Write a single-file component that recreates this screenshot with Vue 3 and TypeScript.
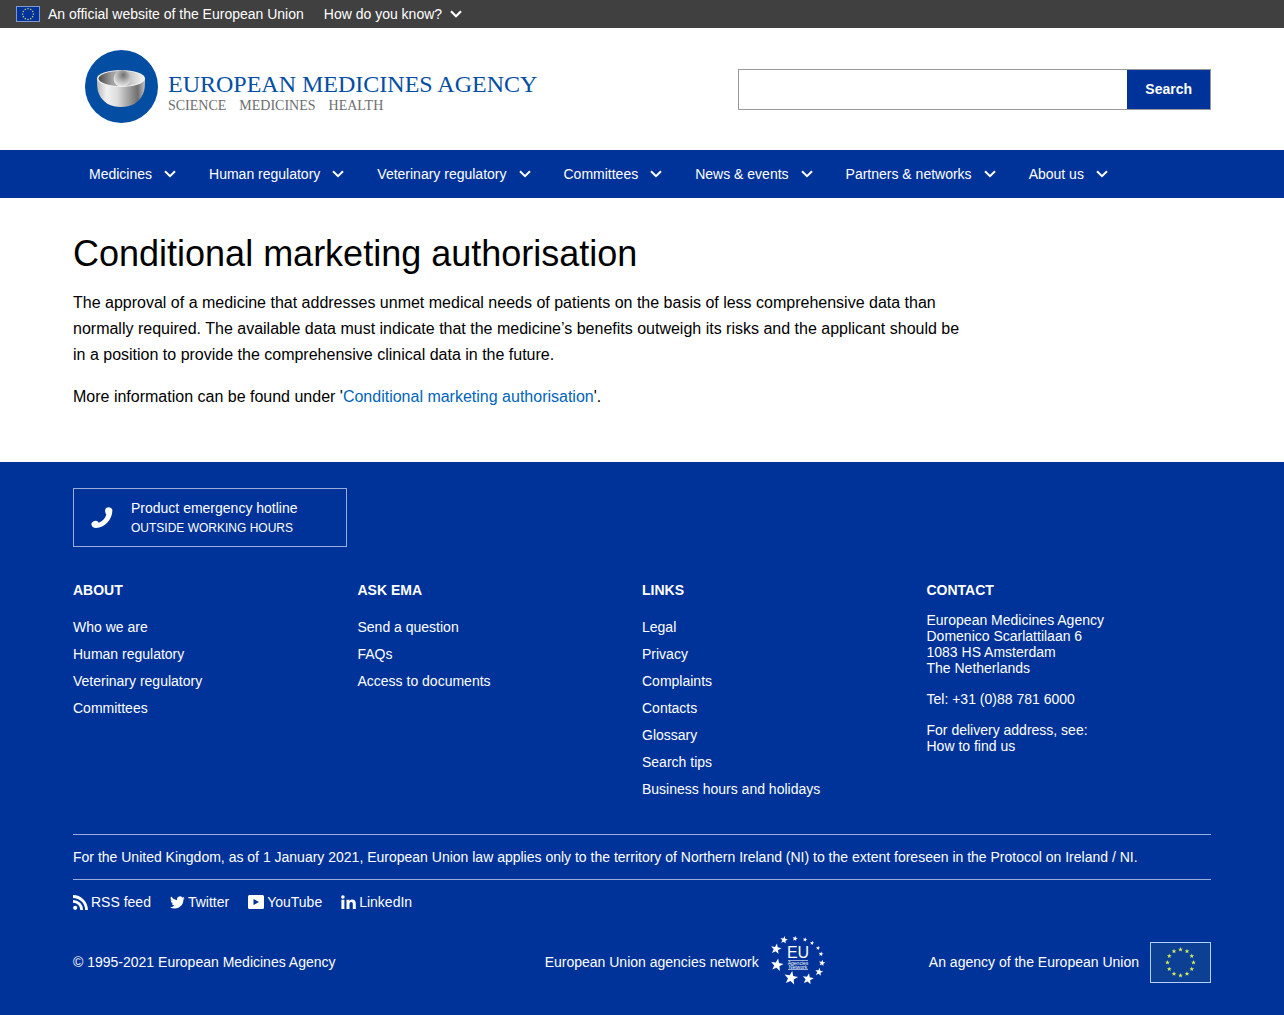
<script setup lang="ts">
interface Star {
  x: number
  y: number
  r: number
}

interface LinkColumn {
  title: string
  links: string[]
}

const menu: string[] = [
  'Medicines',
  'Human regulatory',
  'Veterinary regulatory',
  'Committees',
  'News & events',
  'Partners & networks',
  'About us',
]

const columns: LinkColumn[] = [
  { title: 'About', links: ['Who we are', 'Human regulatory', 'Veterinary regulatory', 'Committees'] },
  { title: 'Ask EMA', links: ['Send a question', 'FAQs', 'Access to documents'] },
  {
    title: 'Links',
    links: ['Legal', 'Privacy', 'Complaints', 'Contacts', 'Glossary', 'Search tips', 'Business hours and holidays'],
  },
]

function starPoints(s: Star, tilt = 0): string {
  return Array.from({ length: 10 }, (_, i) => {
    const radius = i % 2 === 0 ? s.r : s.r * 0.42
    const angle = ((i * 36 - 90 + tilt) * Math.PI) / 180
    return `${(s.x + radius * Math.cos(angle)).toFixed(2)},${(s.y + radius * Math.sin(angle)).toFixed(2)}`
  }).join(' ')
}

function ring(cx: number, cy: number, distance: number, r: number): Star[] {
  return Array.from({ length: 12 }, (_, i) => {
    const angle = (i * Math.PI) / 6
    return { x: cx + distance * Math.sin(angle), y: cy - distance * Math.cos(angle), r }
  })
}

const smallFlag = ring(12, 8, 5.4, 1.1)
const largeFlag = ring(30.5, 20.5, 13, 2.5)

// The network emblem's stars shrink clockwise from the lower left.
const networkStars: Star[] = [
  { x: 6, y: 13, r: 5.6 },
  { x: 14, y: 4, r: 4 },
  { x: 25, y: 2.6, r: 2.8 },
  { x: 35, y: 3.6, r: 2.4 },
  { x: 42, y: 7, r: 2.2 },
  { x: 48, y: 12, r: 2.2 },
  { x: 51, y: 18, r: 2.6 },
  { x: 52, y: 27, r: 3.4 },
  { x: 49, y: 36, r: 4.2 },
  { x: 38, y: 43, r: 5.8 },
  { x: 21, y: 42, r: 7.2 },
  { x: 7, y: 29, r: 6.6 },
]
</script>

<template>
  <div class="page">
    <div class="globan">
      <svg class="globan-flag" width="24" height="16" viewBox="0 0 24 16" aria-hidden="true">
        <rect x="0.5" y="0.5" width="23" height="15" fill="#039" stroke="#7f99cc" />
        <polygon v-for="(s, i) in smallFlag" :key="i" :points="starPoints(s)" fill="#e8e86a" />
      </svg>
      <span>An official website of the European Union</span>
      <button type="button" class="know">
        How do you know?
        <svg width="12" height="8" viewBox="0 0 12 8" aria-hidden="true">
          <path d="M1 1.2 6 6.2 11 1.2" fill="none" stroke="currentColor" stroke-width="2.2" />
        </svg>
      </button>
    </div>

    <header class="header container">
      <a class="logo" href="#">
        <svg width="73" height="73" viewBox="0 0 73 73" aria-hidden="true">
          <defs>
            <linearGradient id="bowl" x1="0" x2="1">
              <stop offset="0" stop-color="#b9b9b9" />
              <stop offset="0.2" stop-color="#f1f1f1" />
              <stop offset="0.42" stop-color="#dedede" />
              <stop offset="0.85" stop-color="#6f6f6f" />
              <stop offset="1" stop-color="#c4c4c4" />
            </linearGradient>
            <linearGradient id="hollow" x1="0" x2="1">
              <stop offset="0" stop-color="#4c4c4c" />
              <stop offset="0.3" stop-color="#a0a0a0" />
              <stop offset="0.65" stop-color="#bdbdbd" />
              <stop offset="1" stop-color="#f4f4f4" />
            </linearGradient>
            <radialGradient id="ball" cx="0.58" cy="0.3" r="0.7">
              <stop offset="0" stop-color="#6e6e6e" />
              <stop offset="0.5" stop-color="#b4b4b4" />
              <stop offset="1" stop-color="#ededed" />
            </radialGradient>
          </defs>
          <circle cx="36.5" cy="36.5" r="36.5" fill="#034ea2" />
          <path d="M12 28C12 34 12 40 14 44C18 53 26 57 36 57S54 53 58 44C60 40 60 34 60 28Z" fill="url(#bowl)" />
          <ellipse cx="36" cy="28.5" rx="24" ry="8.5" fill="#f2f2f2" />
          <ellipse cx="36" cy="28.5" rx="22.5" ry="7.5" fill="url(#hollow)" />
          <circle cx="37" cy="28.5" r="8.5" fill="url(#ball)" />
        </svg>
        <span class="wordmark">
          <span class="agency">EUROPEAN MEDICINES AGENCY</span>
          <span class="tagline"><span>SCIENCE</span><span>MEDICINES</span><span>HEALTH</span></span>
        </span>
      </a>
      <form class="search" role="search" @submit.prevent>
        <input type="search" aria-label="Search" />
        <button type="submit">Search</button>
      </form>
    </header>

    <nav class="nav">
      <div class="nav-items container">
        <button v-for="item in menu" :key="item" type="button">
          {{ item }}
          <svg width="12" height="8" viewBox="0 0 12 8" aria-hidden="true">
            <path d="M1 1.2 6 6.2 11 1.2" fill="none" stroke="currentColor" stroke-width="2" />
          </svg>
        </button>
      </div>
    </nav>

    <main class="main container">
      <h1>Conditional marketing authorisation</h1>
      <p>
        The approval of a medicine that addresses unmet medical needs of patients on the basis of less comprehensive
        data than normally required. The available data must indicate that the medicine’s benefits outweigh its risks
        and the applicant should be in a position to provide the comprehensive clinical data in the future.
      </p>
      <p>More information can be found under '<a href="#">Conditional marketing authorisation</a>'.</p>
    </main>

    <footer class="footer">
      <div class="container">
        <a class="hotline" href="#">
          <svg width="22" height="22" viewBox="0 0 22 22" aria-hidden="true">
            <path
              fill="#fff"
              d="M15.5 .7C17.6-.6 20.8.5 21.3 2.700 22 11.500 14 21 5 21 2.500 21 .4 19.300.4 16.900.5 14.500 4.800 12.900 6.600 14.300L7.700 15.700C11 14.500 14.200 11.500 15.300 7.700L14.500 6C13.700 4 14 1.700 15.500.7Z"
            />
          </svg>
          <span class="hotline-text">
            <span>Product emergency hotline</span>
            <small>OUTSIDE WORKING HOURS</small>
          </span>
        </a>

        <div class="columns">
          <section v-for="column in columns" :key="column.title">
            <h2>{{ column.title }}</h2>
            <ul>
              <li v-for="link in column.links" :key="link"><a href="#">{{ link }}</a></li>
            </ul>
          </section>
          <section>
            <h2>Contact</h2>
            <address>
              <p>
                European Medicines Agency<br />Domenico Scarlattilaan 6<br />1083 HS Amsterdam<br />The Netherlands
              </p>
              <p>Tel: +31 (0)88 781 6000</p>
              <p>For delivery address, see:<br /><a href="#">How to find us</a></p>
            </address>
          </section>
        </div>

        <p class="notice">
          For the United Kingdom, as of 1 January 2021, European Union law applies only to the territory of Northern
          Ireland (NI) to the extent foreseen in the Protocol on Ireland / NI.
        </p>

        <div class="social">
          <a href="#">
            <svg width="15" height="15" viewBox="0 0 15 15" aria-hidden="true">
              <circle cx="2.2" cy="12.8" r="2.1" fill="#fff" />
              <path
                d="M0 6.3A8.7 8.7 0 0 1 8.7 15M0 1.5A13.5 13.5 0 0 1 13.5 15"
                fill="none"
                stroke="#fff"
                stroke-width="2.8"
              />
            </svg>
            RSS feed
          </a>
          <a href="#">
            <svg width="15" height="15" viewBox="0 0 24 24" aria-hidden="true">
              <path
                fill="#fff"
                d="M23.500 4.600a10 10 0 0 1-2.800.8 5 5 0 0 0 2.100-2.700c-.9.500-2 1-3.100 1.200a4.900 4.900 0 0 0-8.400 4.500A14 14 0 0 1 1.700 2.500a4.900 4.900 0 0 0 1.500 6.500 4.900 4.900 0 0 1-2.200-.6v.1a4.900 4.900 0 0 0 3.900 4.800 5 5 0 0 1-2.200.1 4.900 4.900 0 0 0 4.600 3.400A9.900 9.900 0 0 1 0 19.500a13.900 13.900 0 0 0 7.500 2.200c9.100 0 14.300-7.700 14-14.600A10 10 0 0 0 23.500 4.600Z"
              />
            </svg>
            Twitter
          </a>
          <a href="#">
            <svg width="16" height="14" viewBox="0 0 16 14" aria-hidden="true">
              <path
                fill="#fff"
                fill-rule="evenodd"
                d="M1.500 0h13A1.500 1.500 0 0 1 16 1.500v11a1.500 1.500 0 0 1-1.500 1.500h-13A1.500 1.500 0 0 1 0 12.500v-11A1.500 1.500 0 0 1 1.500 0ZM5.500 4v6L11 7Z"
              />
            </svg>
            YouTube
          </a>
          <a href="#">
            <svg width="15" height="14" viewBox="0 0 15 14" aria-hidden="true">
              <circle cx="1.900" cy="2" r="1.800" fill="#fff" />
              <path
                fill="#fff"
                d="M.4 4.800h3V14h-3ZM5.500 4.800h2.900v1.300C9 5.100 10 4.500 11.300 4.500c2.700 0 3.500 1.700 3.500 4.200V14h-3V9.300c0-1.200-.1-2.400-1.600-2.400S8.500 8 8.500 9.200V14h-3Z"
              />
            </svg>
            LinkedIn
          </a>
        </div>

        <div class="bottom">
          <span>© 1995-2021 European Medicines Agency</span>
          <a class="network" href="#">
            European Union agencies network
            <svg width="56" height="52" viewBox="0 0 56 52" aria-hidden="true">
              <polygon v-for="(s, i) in networkStars" :key="i" :points="starPoints(s, 10)" fill="#fff" />
              <text class="emblem-title" x="28" y="22" text-anchor="middle">EU</text>
              <path d="M18 24.500H38M18 33.500H38" stroke="#fff" stroke-opacity="0.6" />
              <text class="emblem-text" text-anchor="middle">
                <tspan x="28" y="29">Agencies</tspan>
                <tspan x="28" y="33">Network</tspan>
              </text>
            </svg>
          </a>
          <a class="union" href="#">
            An agency of the European Union
            <svg width="61" height="41" viewBox="0 0 61 41" aria-hidden="true">
              <rect x="0.500" y="0.500" width="60" height="40" fill="#0c4095" stroke="#b5d0f5" />
              <polygon v-for="(s, i) in largeFlag" :key="i" :points="starPoints(s)" fill="#d9ed5c" />
            </svg>
          </a>
        </div>
      </div>
    </footer>
  </div>
</template>

<style>
body {
  margin: 0;
}
</style>

<style scoped>
.page {
  display: flex;
  flex-direction: column;
  min-height: 100vh;
  background: #fff;
  color: #000;
  font: 14px/16px 'Liberation Sans', Arial, sans-serif;
}

.page *,
.page {
  box-sizing: border-box;
}

.container {
  width: calc(100% - 32px);
  max-width: 1138px;
  margin: 0 auto;
}

svg {
  flex: none;
}

button,
input {
  font: inherit;
}

button {
  border: 0;
  background: none;
  color: inherit;
  cursor: pointer;
}

.globan {
  display: flex;
  align-items: center;
  padding: 6px 16px;
  background: #404040;
  color: #fff;
}

.globan-flag {
  margin-right: 8px;
}

.know {
  display: flex;
  align-items: center;
  gap: 8px;
  margin-left: 20px;
  padding: 0;
}

.header {
  display: flex;
  align-items: center;
  justify-content: space-between;
  padding: 22px 0 27px;
}

.logo {
  display: flex;
  align-items: center;
  gap: 10px;
  margin-left: 12px;
  font-family: 'Liberation Serif', 'Times New Roman', serif;
  text-decoration: none;
}

.wordmark {
  display: flex;
  flex-direction: column;
  padding-top: 14px;
}

.agency {
  color: #034ea2;
  font-size: 24px;
  line-height: 24px;
  white-space: nowrap;
}

.tagline {
  display: flex;
  gap: 13px;
  color: #6d6e70;
  font-size: 14px;
  line-height: 20px;
}

.search {
  display: flex;
  width: 473px;
  height: 41px;
  margin-top: 5px;
  border: 1px solid #999;
}

.search input {
  flex: 1;
  min-width: 0;
  padding: 0 12px;
  border: 0;
  outline: 0;
}

.search button {
  padding: 0 18px;
  background: #039;
  color: #fff;
  font-weight: bold;
}

.nav {
  background: #039;
  color: #fff;
}

.nav-items {
  display: flex;
  flex-wrap: wrap;
  column-gap: 1px;
}

.nav-items button {
  display: flex;
  align-items: center;
  gap: 12px;
  padding: 16px;
}

.main {
  padding: 36px 0 52px;
}

.main h1 {
  margin: 0 0 16px;
  font-size: 36px;
  font-weight: normal;
  line-height: 40px;
}

.main p {
  max-width: 890px;
  margin: 0 0 16px;
  font-size: 16px;
  line-height: 26px;
}

.main p:last-child {
  margin-bottom: 0;
}

.main a {
  color: #0065bd;
  text-decoration: none;
}

.footer {
  flex: 1;
  padding: 26px 0 24px;
  background: #039;
  color: #fff;
}

.footer a {
  color: inherit;
  text-decoration: none;
}

.hotline {
  display: flex;
  align-items: center;
  gap: 18px;
  width: 274px;
  padding: 9px 17px 8px;
  border: 1px solid #99add6;
}

.hotline-text {
  display: flex;
  flex-direction: column;
  line-height: 20px;
}

.hotline-text small {
  font-size: 12px;
}

.columns {
  display: grid;
  grid-template-columns: repeat(4, 1fr);
  padding: 35px 0 37px;
}

.columns h2 {
  margin: 0 0 14px;
  font-size: 14px;
  line-height: 16px;
  text-transform: uppercase;
}

.columns ul {
  display: flex;
  flex-direction: column;
  gap: 11px;
  margin: 0;
  padding: 7px 0 0;
  list-style: none;
}

address {
  font-style: normal;
}

address p {
  margin: 0 0 15px;
}

.notice {
  margin: 0;
  padding: 14px 0;
  border-top: 1px solid #99add6;
  border-bottom: 1px solid #99add6;
}

.social {
  display: flex;
  gap: 19px;
  padding: 14px 0 26px;
}

.social a {
  display: flex;
  align-items: center;
  gap: 3px;
}

.bottom {
  display: grid;
  grid-template-columns: repeat(3, 1fr);
  align-items: center;
}

.network,
.union {
  display: flex;
  align-items: center;
  justify-content: flex-end;
  gap: 11px;
}

.network {
  padding-right: 6px;
}

.emblem-title,
.emblem-text {
  fill: #fff;
  font-family: 'Liberation Sans Narrow', 'Liberation Sans', sans-serif;
}

.emblem-title {
  font-size: 16px;
}

.emblem-text {
  font-size: 5px;
}
</style>
